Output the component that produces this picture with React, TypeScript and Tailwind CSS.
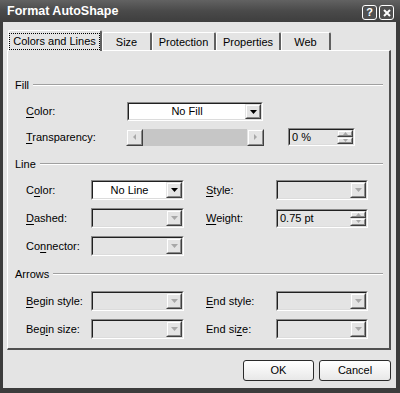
import React from "react";

const DownArrow = ({ disabled }: { disabled?: boolean }) => (
  <svg width="7" height="4" viewBox="0 0 7 4">
    <polygon points="0,0 7,0 3.5,4" fill={disabled ? "#a8a8a8" : "#000"} />
  </svg>
);

const RaisedBox = ({ children, className = "" }: { children?: React.ReactNode; className?: string }) => (
  <div className={`border border-t-[#e4e4e4] border-l-[#e4e4e4] border-r-[#404040] border-b-[#404040] ${className}`}>
    <div className="h-full w-full border border-t-white border-l-white border-r-[#8a8a8a] border-b-[#8a8a8a] bg-[#e4e4e4] flex items-center justify-center">
      {children}
    </div>
  </div>
);

const Sunken = ({ children, className = "", inner = "" }: { children?: React.ReactNode; className?: string; inner?: string }) => (
  <div className={`border border-t-[#8a8a8a] border-l-[#8a8a8a] border-r-white border-b-white ${className}`}>
    <div className={`h-full w-full border border-t-[#202020] border-l-[#202020] border-r-[#dcdcdc] border-b-[#dcdcdc] flex ${inner}`}>
      {children}
    </div>
  </div>
);

const Combo = ({ w, h = "h-[20px]", text, disabled }: { w: string; h?: string; text?: string; disabled?: boolean }) => (
  <Sunken className={`${w} ${h}`} inner={disabled ? "bg-[#e4e4e4]" : "bg-white"}>
    <div className="flex-1 flex items-center justify-center text-[11px] leading-none text-black">{text}</div>
    <RaisedBox className="w-[16px] h-full">
      <DownArrow disabled={disabled} />
    </RaisedBox>
  </Sunken>
);

const Spin = ({ w, h = "h-[20px]", text }: { w: string; h?: string; text: string }) => (
  <Sunken className={`${w} ${h}`} inner="bg-[#e4e4e4]">
    <div className="flex-1 flex items-center pl-[2px] text-[11px] leading-none text-black">{text}</div>
    <div className="w-[16px] h-full flex flex-col">
      <RaisedBox className="w-full flex-1">
        <svg width="5" height="3" viewBox="0 0 5 3"><polygon points="2.5,0 5,3 0,3" fill="#a8a8a8" /></svg>
      </RaisedBox>
      <RaisedBox className="w-full flex-1">
        <svg width="5" height="3" viewBox="0 0 5 3"><polygon points="0,0 5,0 2.5,3" fill="#a8a8a8" /></svg>
      </RaisedBox>
    </div>
  </Sunken>
);

const Label = ({ pre, u, post, w }: { pre: string; u: string; post: string; w: string }) => (
  <div className={`${w} text-[11px] leading-none text-black whitespace-nowrap`}>
    {pre}
    <span className="underline underline-offset-[2px]">{u}</span>
    {post}
  </div>
);

const Header = ({ text }: { text: string }) => (
  <div className="flex items-center h-[14px] pl-[7px] pr-[6px]">
    <span className="text-[11px] leading-none text-black">{text}</span>
    <div className="flex-1 ml-[4px] h-[2px] border-t border-t-[#a0a0a0] border-b border-b-white" />
  </div>
);

const Tab = ({ text, w }: { text: string; w: string }) => (
  <div className={`${w} h-[18px] pt-[2px] border-t border-l border-t-white border-l-white border-r-2 border-r-[#606060] rounded-t-[2px] flex items-center justify-center text-[11px] leading-none text-black`}>
    {text}
  </div>
);

export default function App() {
  return (
    <div className="w-[400px] h-[393px] bg-[#3c3c3c] flex flex-col font-['Liberation_Sans',Arial,sans-serif] overflow-hidden">
      {/* Title bar */}
      <div className="h-[22px] flex items-center pl-[7px] pr-[6px] bg-gradient-to-b from-[#626262] via-[#4a4a4a] to-[#3e3e3e]">
        <div className="flex-1 text-white font-bold text-[12.5px] leading-none">Format AutoShape</div>
        <div className="flex gap-[2px] mt-[3px]">
          <div className="w-[15px] h-[15px] border border-white rounded-[3px] bg-[#505050] flex items-center justify-center text-white font-bold text-[11px] leading-none">?</div>
          <div className="w-[15px] h-[15px] border border-white rounded-[3px] bg-[#505050] flex items-center justify-center">
            <svg width="8" height="8" viewBox="0 0 8 8"><path d="M1 1L7 7M7 1L1 7" stroke="#fff" strokeWidth="2" /></svg>
          </div>
        </div>
      </div>
      {/* Body */}
      <div className="flex-1 ml-[3px] mr-[4px] mb-[5px] bg-[#e4e4e4] pl-[4px] pr-[5px] flex flex-col">
        {/* Tabs */}
        <div className="h-[28px] flex items-end pl-[1px]">
          <div className="relative z-10 w-[94px] h-[21px] mb-[-1px] pt-[1px] bg-[#e4e4e4] border-t border-l border-t-white border-l-white border-r-2 border-r-[#606060] rounded-t-[2px] flex items-center justify-center">
            <div className="px-[3px] py-[2px] border border-dotted border-black text-[11px] leading-none text-black">Colors and Lines</div>
          </div>
          <Tab text="Size" w="w-[50px]" />
          <Tab text="Protection" w="w-[64px]" />
          <Tab text="Properties" w="w-[65px]" />
          <Tab text="Web" w="w-[50px]" />
        </div>
        {/* Panel */}
        <div className="h-[300px] border-t border-l border-t-white border-l-white border-r-2 border-b-2 border-r-[#505050] border-b-[#505050] flex flex-col">
          <div className="mt-[27px]"><Header text="Fill" /></div>
          <div className="mt-[10px] h-[19px] flex items-center pl-[18px]">
            <Label pre="" u="C" post="olor:" w="w-[101px]" />
            <Combo w="w-[136px]" h="h-[19px]" text="No Fill" />
          </div>
          <div className="mt-[7px] h-[18px] flex items-center pl-[18px]">
            <Label pre="" u="T" post="ransparency:" w="w-[100px]" />
            <div className="w-[138px] h-[17px] flex">
              <RaisedBox className="w-[17px] h-full">
                <svg width="3" height="6" viewBox="0 0 3 6"><polygon points="3,0 3,6 0,3" fill="#a8a8a8" /></svg>
              </RaisedBox>
              <div className="flex-1 h-full bg-[#c6c6c6]" />
              <RaisedBox className="w-[17px] h-full">
                <svg width="3" height="6" viewBox="0 0 3 6"><polygon points="0,0 0,6 3,3" fill="#a8a8a8" /></svg>
              </RaisedBox>
            </div>
            <div className="ml-[24px]"><Spin w="w-[67px]" h="h-[18px]" text="0 %" /></div>
          </div>
          <div className="mt-[11px]"><Header text="Line" /></div>
          <div className="mt-[9px] h-[20px] flex items-center pl-[18px]">
            <Label pre="C" u="o" post="lor:" w="w-[65px]" />
            <Combo w="w-[93px]" text="No Line" />
            <div className="ml-[22px]"><Label pre="" u="S" post="tyle:" w="w-[70px]" /></div>
            <Combo w="w-[92px]" disabled />
          </div>
          <div className="mt-[8px] h-[20px] flex items-center pl-[18px]">
            <Label pre="" u="D" post="ashed:" w="w-[65px]" />
            <Combo w="w-[93px]" disabled />
            <div className="ml-[22px]"><Label pre="" u="W" post="eight:" w="w-[70px]" /></div>
            <Spin w="w-[92px]" h="h-[19px]" text="0.75 pt" />
          </div>
          <div className="mt-[8px] h-[20px] flex items-center pl-[18px]">
            <Label pre="Co" u="n" post="nector:" w="w-[65px]" />
            <Combo w="w-[93px]" disabled />
          </div>
          <div className="mt-[11px]"><Header text="Arrows" /></div>
          <div className="mt-[10px] h-[20px] flex items-center pl-[18px]">
            <Label pre="" u="B" post="egin style:" w="w-[65px]" />
            <Combo w="w-[93px]" disabled />
            <div className="ml-[22px]"><Label pre="" u="E" post="nd style:" w="w-[70px]" /></div>
            <Combo w="w-[92px]" disabled />
          </div>
          <div className="mt-[8px] h-[20px] flex items-center pl-[18px]">
            <Label pre="Beg" u="i" post="n size:" w="w-[65px]" />
            <Combo w="w-[93px]" disabled />
            <div className="ml-[22px]"><Label pre="End si" u="z" post="e:" w="w-[70px]" /></div>
            <Combo w="w-[92px]" disabled />
          </div>
        </div>
        {/* Buttons */}
        <div className="mt-[10px] h-[21px] flex justify-end gap-[5px]">
          <div className="w-[71px] h-full border border-[#2a2a2a] rounded-[3px] bg-gradient-to-b from-white to-[#e8e8e8] flex items-center justify-center text-[11px] leading-none text-black">OK</div>
          <div className="w-[72px] h-full border border-[#2a2a2a] rounded-[3px] bg-gradient-to-b from-white to-[#e8e8e8] flex items-center justify-center text-[11px] leading-none text-black">Cancel</div>
        </div>
      </div>
    </div>
  );
}
